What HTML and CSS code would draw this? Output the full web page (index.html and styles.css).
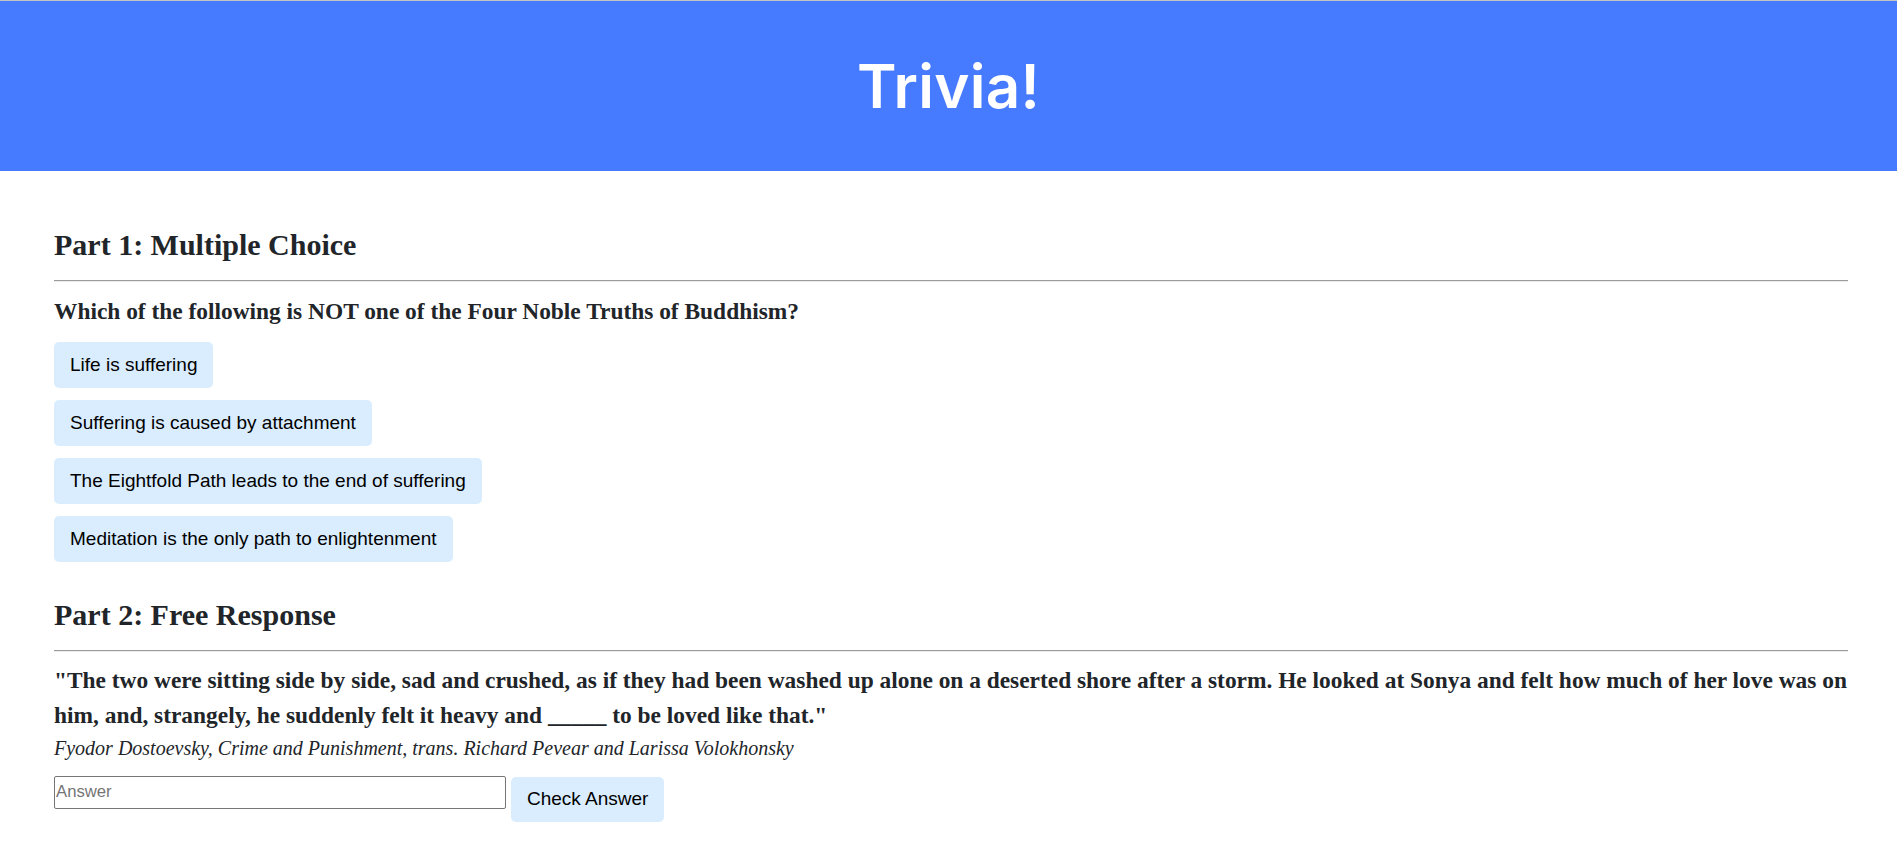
FILE: index.html
```html
<!DOCTYPE html>
<html lang="en">
<head>
<meta charset="utf-8">
<title>Trivia!</title>
<link rel="stylesheet" href="styles.css">
</head>
<body>
  <div class="header">
    <h1 class="title">Trivia!</h1>
  </div>
  <div class="container">
    <div class="section">
      <h2 class="part">Part 1: Multiple Choice</h2>
      <hr class="rule">
      <h3 class="question">Which of the following is NOT one of the Four Noble Truths of Buddhism?</h3>
      <div class="choices">
        <button class="choice">Life is suffering</button>
        <button class="choice">Suffering is caused by attachment</button>
        <button class="choice">The Eightfold Path leads to the end of suffering</button>
        <button class="choice">Meditation is the only path to enlightenment</button>
      </div>
    </div>
    <div class="section section-two">
      <h2 class="part">Part 2: Free Response</h2>
      <hr class="rule">
      <h3 class="question quote">"The two were sitting side by side, sad and crushed, as if they had been washed up alone on a deserted shore after a storm. He looked at Sonya and felt how much of her love was on him, and, strangely, he suddenly felt it heavy and _____ to be loved like that."</h3>
      <p class="attribution">Fyodor Dostoevsky, Crime and Punishment, trans. Richard Pevear and Larissa Volokhonsky</p>
      <form class="answer-row">
        <input class="answer" type="text" placeholder="Answer">
        <button class="choice check" type="button">Check Answer</button>
      </form>
    </div>
  </div>
</body>
</html>
```
FILE: styles.css
```css
html, body {
  margin: 0;
  padding: 0;
  background: #ffffff;
}

body {
  color: #212529;
  font-family: "Liberation Serif", "Times New Roman", serif;
  border-top: 1px solid #c4c4c4;
}

.header {
  background-color: #477bff;
  color: #ffffff;
  height: 170px;
  display: flex;
  align-items: center;
  justify-content: center;
}

.title {
  margin: 0;
  font-family: "Inter", "Open Sans", sans-serif;
  font-weight: 600;
  font-size: 60px;
  line-height: 90px;
  letter-spacing: 0.3px;
}

.container {
  padding: 0 49px 0 54px;
}

.section {
  padding-top: 51px;
}

.section-two {
  padding-top: 30px;
}

.part {
  margin: 0;
  font-size: 30px;
  line-height: 45px;
  font-weight: 700;
}

.rule {
  margin: 13px 0 0 0;
  border: 0;
  height: 0;
  border-top: 1px solid #9b9b9b;
  border-bottom: 1px solid #ececec;
}

.question {
  margin: 12px 0 0 0;
  font-size: 23.4px;
  line-height: 35.1px;
  font-weight: 700;
}

.quote {
  margin-right: -20px;
  margin-top: 11px;
}

.choices {
  margin-top: 13px;
  display: flex;
  flex-direction: column;
  align-items: flex-start;
  gap: 12.5px;
}

.choice {
  font-family: "Liberation Sans", Arial, sans-serif;
  font-size: 19px;
  line-height: 28.5px;
  font-weight: 400;
  color: #000000;
  background-color: #d9edff;
  border: 1.25px solid transparent;
  border-radius: 5px;
  padding: 7.5px 15px;
  margin: 0;
  text-align: center;
}

.attribution {
  margin: 0;
  font-style: italic;
  font-size: 20px;
  line-height: 30px;
}

.answer-row {
  margin-top: 13px;
  display: flex;
  align-items: flex-start;
  gap: 5px;
}

.answer {
  box-sizing: border-box;
  width: 452px;
  height: 33px;
  margin: 0;
  padding: 0 1px;
  border: 1px solid #767676;
  border-radius: 2px;
  font-family: "Liberation Sans", Arial, sans-serif;
  font-size: 16.7px;
  color: #000;
  background: #fff;
}

.answer::placeholder {
  color: #757575;
}

.check {
  margin-top: 1px;
}
```
